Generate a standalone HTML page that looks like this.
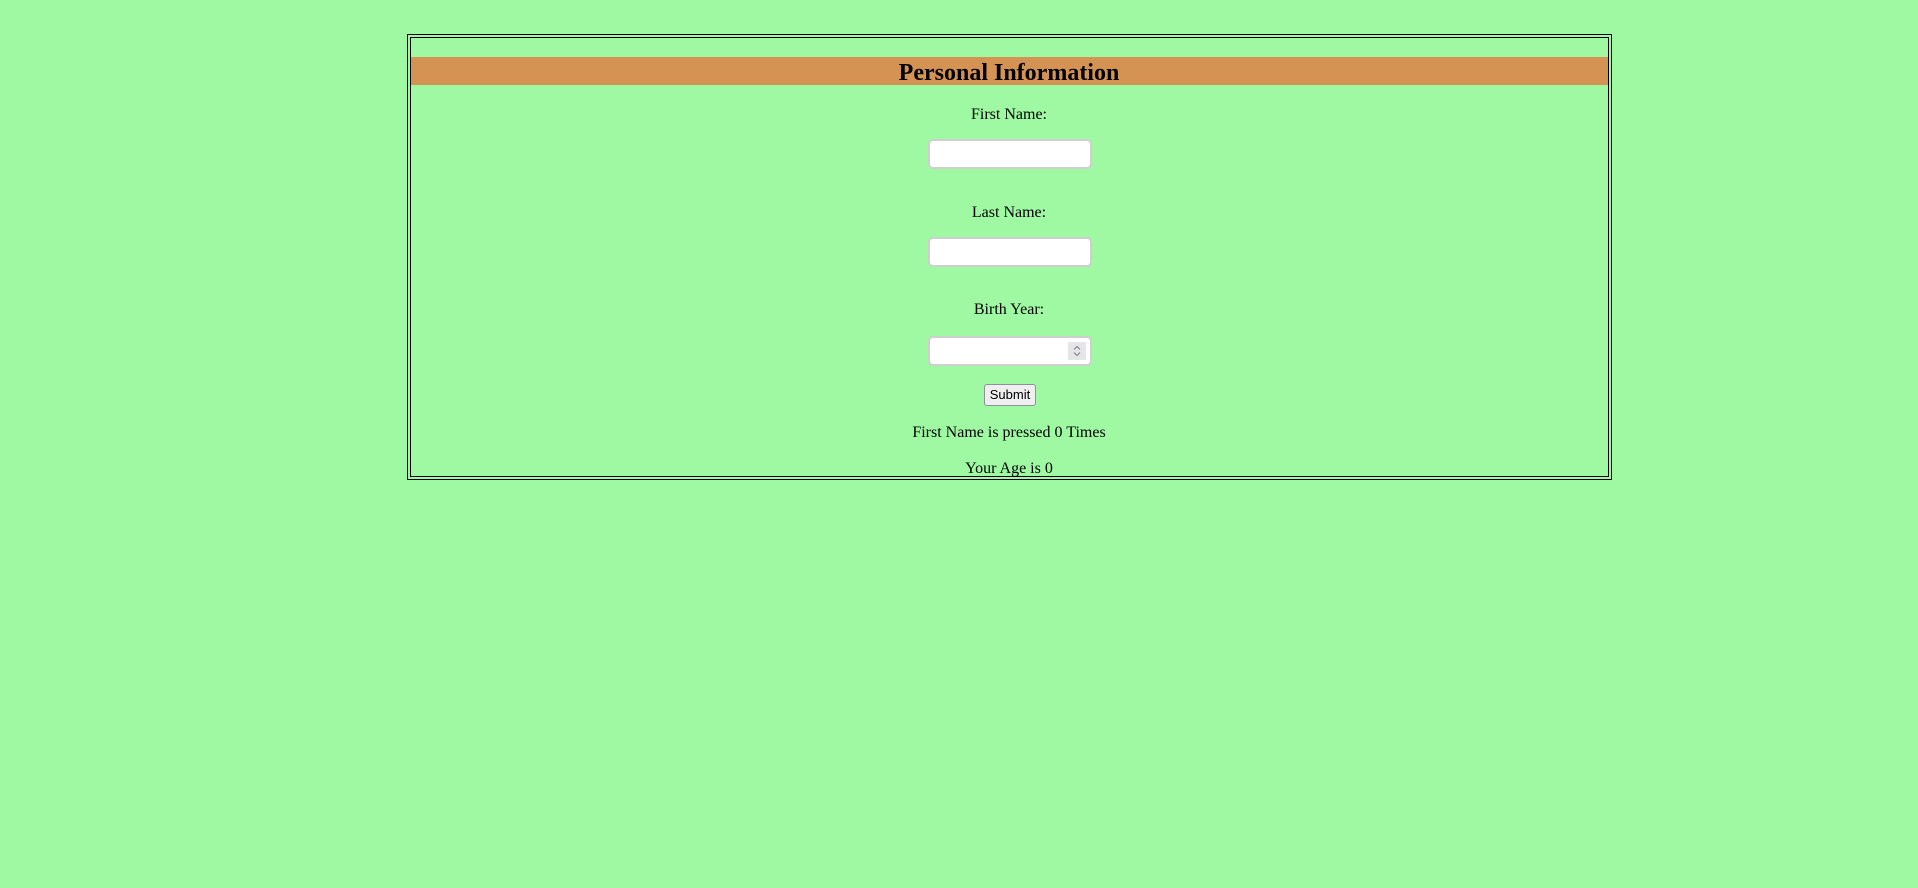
<!DOCTYPE html>
<html><head><style>
body{margin:0;background:#9ef9a2;width:1918px;height:888px;position:relative;font-family:"Liberation Serif",serif;font-size:16px;color:#000;overflow:hidden}
.a{position:absolute}
.t{position:absolute;left:407px;width:1204px;text-align:center;line-height:20px}
.in{position:absolute;left:928px;width:160px;height:26px;background:#fff;border:2px solid #cfcfcf;border-radius:5px}
</style></head><body>
<div class="a" style="left:407px;top:34px;width:1203px;height:444px;border:1px solid #000"></div>
<div class="a" style="left:410px;top:37px;width:1197px;height:438px;border:1px solid #000"></div>
<div class="a" style="left:411px;top:57px;width:1197px;height:28px;background:#d49352"></div>
<div class="t" style="top:60px;font-size:24px;font-weight:bold;line-height:26px">Personal Information</div>
<div class="t" style="top:105px">First Name:</div>
<div class="in" style="top:139px"></div>
<div class="t" style="top:203px">Last Name:</div>
<div class="in" style="top:237px"></div>
<div class="t" style="top:300px">Birth Year:</div>
<div class="in" style="top:336px"><svg class="a" style="right:4px;top:4px" width="18" height="18"><rect width="18" height="18" fill="#e6e6ea"/><path d="M6 7.5L9 4.5L12 7.5M6 10.5L9 13.5L12 10.5" stroke="#888" stroke-width="1.2" fill="none"/></svg></div>
<div class="a" style="left:984px;top:384px;width:50px;height:20px;background:#efeff0;border:1px solid #8f8f9d;border-radius:3px;font-family:'Liberation Sans',sans-serif;font-size:13px;line-height:20px;text-align:center">Submit</div>
<div class="t" style="top:423px">First Name is pressed 0 Times</div>
<div class="t" style="top:459px">Your Age is 0</div>
</body></html>
